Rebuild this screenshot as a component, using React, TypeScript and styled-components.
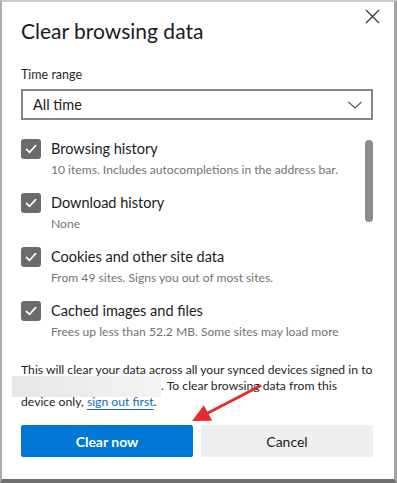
import React from "react";
import styled, { createGlobalStyle } from "styled-components";

const Global = createGlobalStyle`
  html, body { margin: 0; padding: 0; background: #ffffff; }
  body { font-family: Lato, "Open Sans", sans-serif; }
  * { box-sizing: border-box; }
`;

const Frame = styled.div`
  position: relative;
  width: 397px;
  height: 483px;
  background: #ffffff;
  border-left: 2px solid #ababab;
  border-top: 2px solid #cacaca;
  border-right: 3px solid #a3a3a3;
  border-bottom: 4px solid #6f6f6f;
  padding: 15px 21px 0 19px;
  display: flex;
  flex-direction: column;
  color: #1b1b1b;
`;

const CloseButton = styled.button`
  position: absolute;
  top: 6px;
  right: 14px;
  width: 16px;
  height: 16px;
  padding: 0;
  border: none;
  background: transparent;
  display: flex;
  align-items: center;
  justify-content: center;
`;

const Title = styled.h1`
  margin: 0;
  font-size: 21px;
  line-height: 28px;
  font-weight: 400;
  color: #1b1b1b;
`;

const FieldLabel = styled.div`
  margin-top: 21px;
  font-size: 12.5px;
  line-height: 18px;
  color: #2a2a2a;
`;

const Select = styled.div`
  margin-top: 5px;
  height: 31px;
  border: 2px solid #858585;
  display: flex;
  align-items: center;
  justify-content: space-between;
  padding: 0 8px 0 10px;
  font-size: 14.5px;
  color: #1b1b1b;
`;

const ListArea = styled.div`
  margin-top: 18px;
  display: flex;
  gap: 12px;
  height: 215px;
`;

const Items = styled.div`
  flex: 1;
  min-width: 0;
  display: flex;
  flex-direction: column;
  gap: 12px;
`;

const ScrollThumb = styled.div`
  flex-shrink: 0;
  width: 8px;
  height: 82px;
  margin-top: 2px;
  border-radius: 4px;
  background: #8c8c8c;
`;

const Item = styled.div`
  display: flex;
  gap: 10px;
  align-items: flex-start;
`;

const Box = styled.div`
  width: 20px;
  height: 20px;
  margin-top: 1px;
  border-radius: 3px;
  background: #6b6b6b;
  display: flex;
  align-items: center;
  justify-content: center;
  flex-shrink: 0;
`;

const ItemText = styled.div`
  display: flex;
  flex-direction: column;
`;

const ItemLabel = styled.div`
  font-size: 14.5px;
  line-height: 22px;
  color: #1b1b1b;
`;

const ItemDesc = styled.div`
  font-size: 12.1px;
  line-height: 20px;
  color: #737373;
  white-space: nowrap;
`;

const Notice = styled.p`
  margin: 9px 0 0;
  font-size: 12.2px;
  line-height: 16px;
  color: #262626;
`;

const Redacted = styled.span`
  display: inline-block;
  width: 149px;
  height: 21px;
  margin: -4px 0 -4px -9px;
  vertical-align: middle;
  background: linear-gradient(90deg, #e6e6e6, #eeeeee 60%, #f3f3f3);
`;

const Link = styled.a`
  color: #0f6cbd;
  text-decoration: underline;
  text-underline-offset: 3px;
`;

const Buttons = styled.div`
  margin-top: 15px;
  display: flex;
  gap: 8px;
`;

const Button = styled.button<{ $primary?: boolean }>`
  flex: 1;
  height: 32px;
  border: none;
  border-radius: 2px;
  font-family: inherit;
  font-size: 14px;
  font-weight: ${(p) => (p.$primary ? 700 : 400)};
  background: ${(p) => (p.$primary ? "#0078d4" : "#efefef")};
  color: ${(p) => (p.$primary ? "#ffffff" : "#1b1b1b")};
`;

const Arrow = styled.svg`
  position: absolute;
  left: 0;
  top: 0;
  pointer-events: none;
`;

const Check = () => (
  <svg width="14" height="14" viewBox="0 0 14 14">
    <path d="M2.5 7.3 L5.6 10.3 L11.6 3.6" fill="none" stroke="#ffffff" strokeWidth="1.7" strokeLinecap="round" strokeLinejoin="round" />
  </svg>
);

const items = [
  { label: "Browsing history", desc: "10 items. Includes autocompletions in the address bar." },
  { label: "Download history", desc: "None" },
  { label: "Cookies and other site data", desc: "From 49 sites. Signs you out of most sites." },
  { label: "Cached images and files", desc: "Frees up less than 52.2 MB. Some sites may load more" },
];

export default function App() {
  return (
    <>
      <Global />
      <Frame>
        <CloseButton aria-label="Close">
          <svg width="15" height="15" viewBox="0 0 15 15">
            <path d="M1 1 L14 14 M14 1 L1 14" stroke="#333" strokeWidth="1.2" fill="none" />
          </svg>
        </CloseButton>
        <Title>Clear browsing data</Title>
        <FieldLabel>Time range</FieldLabel>
        <Select>
          <span>All time</span>
          <svg width="16" height="10" viewBox="0 0 16 10">
            <path d="M1.5 2 L8 8 L14.5 2" fill="none" stroke="#555" strokeWidth="1.1" />
          </svg>
        </Select>
        <ListArea>
          <Items>
            {items.map((it) => (
              <Item key={it.label}>
                <Box>
                  <Check />
                </Box>
                <ItemText>
                  <ItemLabel>{it.label}</ItemLabel>
                  <ItemDesc>{it.desc}</ItemDesc>
                </ItemText>
              </Item>
            ))}
          </Items>
          <ScrollThumb />
        </ListArea>
        <Notice>
          This will clear your data across all your synced devices signed in to{" "}
          <Redacted />. To clear browsing data from this device only, <Link href="#">sign out first</Link>.
        </Notice>
        <Buttons>
          <Button $primary>Clear now</Button>
          <Button>Cancel</Button>
        </Buttons>
        <Arrow width="397" height="483" viewBox="0 0 397 483">
          <line x1="258" y1="384" x2="204" y2="412" stroke="#e52b2b" strokeWidth="3" strokeLinecap="round" />
          <polygon points="190,419 201.8,403.2 210.2,418.8" fill="#e52b2b" />
        </Arrow>
      </Frame>
    </>
  );
}
